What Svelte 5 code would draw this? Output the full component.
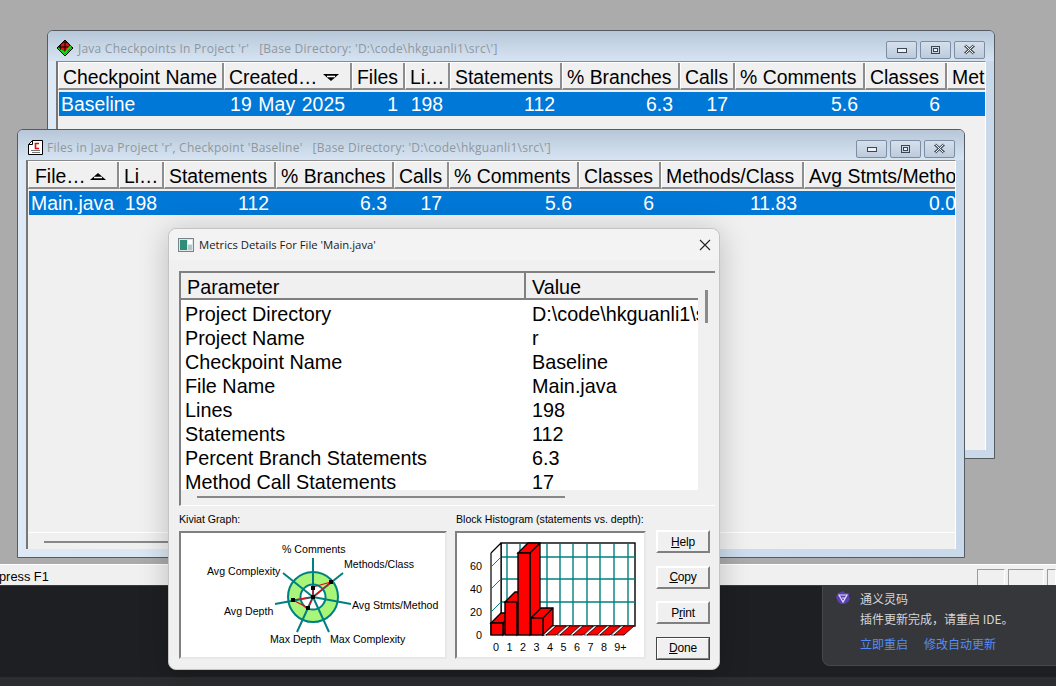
<script>
  const cols1 = [
    { t: 'Checkpoint Name', w: 166 }, { t: 'Created…', w: 128, sort: 'down' }, { t: 'Files', w: 53 }, { t: 'Li…', w: 45 },
    { t: 'Statements', w: 112 }, { t: '% Branches', w: 118 }, { t: 'Calls', w: 55 }, { t: '% Comments', w: 130 },
    { t: 'Classes', w: 82 }, { t: 'Methods/Class', w: 143 }
  ];
  const row1 = [
    { t: 'Baseline', w: 166, l: 1 }, { t: '19 May 2025', w: 128, l: 1 }, { t: '1', w: 53 }, { t: '198', w: 45 },
    { t: '112', w: 112 }, { t: '6.3', w: 118 }, { t: '17', w: 55 }, { t: '5.6', w: 130 }, { t: '6', w: 82 }, { t: '11.83', w: 143 }
  ];
  const cols2 = [
    { t: 'File…', w: 91, sort: 'up' }, { t: 'Li…', w: 45 }, { t: 'Statements', w: 112 }, { t: '% Branches', w: 118 },
    { t: 'Calls', w: 55 }, { t: '% Comments', w: 130 }, { t: 'Classes', w: 82 }, { t: 'Methods/Class', w: 143 }, { t: 'Avg Stmts/Method', w: 170 }
  ];
  const row2 = [
    { t: 'Main.java', w: 91, l: 1 }, { t: '198', w: 45 }, { t: '112', w: 112 }, { t: '6.3', w: 118 }, { t: '17', w: 55 },
    { t: '5.6', w: 130 }, { t: '6', w: 82 }, { t: '11.83', w: 143 }, { t: '0.0', w: 159 }
  ];
  const params = [
    ['Project Directory', 'D:\\code\\hkguanli1\\src\\'], ['Project Name', 'r'], ['Checkpoint Name', 'Baseline'],
    ['File Name', 'Main.java'], ['Lines', '198'], ['Statements', '112'], ['Percent Branch Statements', '6.3'], ['Method Call Statements', '17']
  ];
  const spokes = [[313, 558], [343, 573], [351, 604], [329, 632], [297, 632], [275, 604], [283, 573]];
  const kLabels = [
    ['% Comments', 282, 553], ['Methods/Class', 344, 568], ['Avg Stmts/Method', 352, 609], ['Max Complexity', 330, 643],
    ['Max Depth', 270, 643], ['Avg Depth', 224, 615], ['Avg Complexity', 207, 575]
  ];
  const bars = [
    { x: 491, top: 623 }, { x: 505, top: 602 }, { x: 518, top: 553 }, { x: 531, top: 618 },
    { x: 544, top: 635 }, { x: 558, top: 635 }, { x: 571, top: 635 }, { x: 585, top: 635 }, { x: 598, top: 635 }, { x: 612, top: 635 }
  ];
  const xLabels = ['0', '1', '2', '3', '4', '5', '6', '7', '8', '9+'];
  const vGrid = [507, 520, 533, 547, 560, 573, 587, 600, 614, 628];
  const yLabels = [[60, 570], [40, 593], [20, 616], [0, 639]];
  const hGrid = [557, 579, 602];
  const buttons = [['H', 'elp'], ['C', 'opy'], ['', 'Print'], ['D', 'one']];
</script>

{#snippet winButtons()}
  <div class="winbtns">
    <div class="wb"><svg width="12" height="8" viewBox="0 0 12 8"><rect x="1.5" y="2.5" width="9" height="4" fill="#eef2f6" stroke="#3c4652"/></svg></div>
    <div class="wb"><svg width="12" height="10" viewBox="0 0 12 10"><rect x="1.5" y="1.5" width="8" height="7" fill="none" stroke="#3c4652"/><rect x="3.5" y="3.5" width="4" height="3" fill="#eef2f6" stroke="#3c4652"/></svg></div>
    <div class="wb close"><svg width="13" height="11" viewBox="0 0 13 11"><path d="M2 1.5 L11 9.5 M11 1.5 L2 9.5" stroke="#4a5460" stroke-width="3"/><path d="M2.5 1.5 L10.5 9.5 M10.5 1.5 L2.5 9.5" stroke="#f4f6f8" stroke-width="1"/></svg></div>
  </div>
{/snippet}

{#snippet listView(cols, row)}
  <div class="list">
    <div class="hdr">
      {#each cols as c}
        <div class="hc" style="flex-basis:{c.w}px">
          <span>{c.t}</span>
          {#if c.sort === 'down'}
            <svg class="sort" width="16" height="9" viewBox="0 0 16 9"><path d="M0 1 H16 L8 8 Z" fill="#000"/><path d="M4 3.5 H12" stroke="#fff" stroke-width="1.5"/></svg>
          {:else if c.sort === 'up'}
            <svg class="sort" width="16" height="9" viewBox="0 0 16 9"><path d="M0 8 H16 L8 1 Z" fill="#000"/><path d="M4 5.5 H12" stroke="#fff" stroke-width="1.5"/></svg>
          {/if}
        </div>
      {/each}
    </div>
    <div class="sel">
      {#each row as c}
        <div class="sc" class:left={c.l} style="flex-basis:{c.w}px">{c.t}</div>
      {/each}
    </div>
  </div>
{/snippet}

<div class="desk">
  <div class="grey"></div>
  <div class="status">
    <span class="hint">press F1</span>
    <div class="cells"><i class="c1"></i><i class="c2"></i><i class="c3"></i></div>
  </div>
  <div class="dark"></div>
  <div class="foot"></div>

  <section class="win w1">
    <header class="tbar">
      <svg class="ic" width="18" height="18" viewBox="0 0 18 18">
        <path d="M9 1 L17 9 L9 17 L1 9 Z" fill="#19d419" stroke="#000"/>
        <circle cx="9" cy="8" r="5" fill="#e01010" stroke="#000"/>
        <path d="M9 1 V15 M2 8 H16" stroke="#000"/>
        <path d="M5 11 L9 14 L15 7" fill="none" stroke="#19d419" stroke-width="2"/>
      </svg>
      <span class="ttl">Java Checkpoints In Project 'r'&nbsp;&nbsp; [Base Directory: 'D:\code\hkguanli1\src\']</span>
      {@render winButtons()}
    </header>
    <div class="client">{@render listView(cols1, row1)}</div>
  </section>

  <section class="win w2">
    <header class="tbar">
      <svg class="ic" width="16" height="16" viewBox="0 0 16 16">
        <path d="M4.5 .5 H14.5 V14.5 H.5 V4.5 Z" fill="#fff" stroke="#000"/>
        <path d="M.5 4.5 H4.5 V.5" fill="none" stroke="#000"/>
        <path d="M11 3.5 H7.5 V8.5 H11" fill="none" stroke="#e01010" stroke-width="1.6"/>
        <path d="M3 10.5 H12 M4 12.5 H12" stroke="#777"/>
      </svg>
      <span class="ttl">Files in Java Project 'r', Checkpoint 'Baseline'&nbsp;&nbsp; [Base Directory: 'D:\code\hkguanli1\src\']</span>
      {@render winButtons()}
    </header>
    <div class="client">
      {@render listView(cols2, row2)}
      <div class="w2scroll"></div>
    </div>
  </section>

  <section class="dlg">
    <header class="dtitle">
      <svg width="16" height="14" viewBox="0 0 16 14"><rect x=".5" y=".5" width="15" height="13" fill="#dfe6e6" stroke="#7a8488"/><rect x="2" y="2" width="7" height="10" fill="#2e8c78"/><rect x="10" y="2" width="4" height="4" fill="#fff"/><rect x="10" y="7" width="4" height="5" fill="#b8c4c8"/></svg>
      <span>Metrics Details For File 'Main.java'</span>
      <svg class="x" width="12" height="12" viewBox="0 0 12 12"><path d="M1 1 L11 11 M11 1 L1 11" stroke="#222" stroke-width="1.1"/></svg>
    </header>
    <div class="dbody">
      <div class="table">
        <div class="thead">
          <div class="th one">Parameter</div>
          <div class="th two">Value</div>
        </div>
        <div class="tmain">
          <div class="rows">
            {#each params as p}
              <div class="tr"><div class="td one">{p[0]}</div><div class="td two">{p[1]}</div></div>
            {/each}
          </div>
          <div class="vbar"><div class="vthumb"></div></div>
        </div>
        <div class="hbar"><div class="hthumb"></div></div>
      </div>

      <div class="lower">
        <div class="panel kiv">
          <div class="cap">Kiviat Graph:</div>
          <div class="sunken">
            <svg width="264" height="124" viewBox="181 533 264 124">
              <circle cx="313" cy="597" r="25" fill="#a8f57a" stroke="#008080" stroke-width="2"/>
              <circle cx="313" cy="597" r="12.5" fill="#fff" stroke="#008080" stroke-width="2"/>
              {#each spokes as s}
                <line x1="313" y1="597" x2={s[0]} y2={s[1]} stroke="#008080" stroke-width="2"/>
              {/each}
              <path d="M313 587 L331 582 L313 597 L308 608 L293 600 L313 597 Z" fill="none" stroke="#f00010" stroke-width="1.2"/>
              <path d="M311 586 h4 v4 h-4 Z M329 580 h4 v4 h-4 Z M311 595 h4 v4 h-4 Z M306 606 h4 v4 h-4 Z M291 598 h4 v4 h-4 Z" fill="#000"/>
              {#each kLabels as l}
                <text x={l[1]} y={l[2]} class="kt">{l[0]}</text>
              {/each}
            </svg>
          </div>
        </div>
        <div class="panel hist">
          <div class="cap">Block Histogram (statements vs. depth):</div>
          <div class="sunken">
            <svg width="187" height="124" viewBox="457 533 187 124">
              <rect x="501" y="543" width="134" height="83" fill="#fff" stroke="#000" stroke-width="1.4"/>
              {#each vGrid as x}
                <line x1={x} y1="544" x2={x} y2="626" stroke="#008080" stroke-width="1.4"/>
              {/each}
              {#each hGrid as y}
                <line x1="501" y1={y} x2="635" y2={y} stroke="#008080" stroke-width="1.4"/>
              {/each}
              <path d="M491 553 L501 543 V626 L491 635 Z" fill="#fff"/>
              <path d="M491 553 L501 543 M491 553 V635 M501 543 V626" stroke="#000" fill="none" stroke-width="1.2"/>
              {#each hGrid as y}
                <line x1="491" y1={y + 10} x2="501" y2={y} stroke="#008080"/>
              {/each}
              {#each bars as b}
                {#if b.top < 635}
                  <path d="M{b.x} {b.top} l10 -10 h12 v{635 - b.top} l-10 10 v-{635 - b.top} h-12 Z" fill="#f00" stroke="#000" stroke-width="1.3"/>
                  <rect x={b.x} y={b.top} width="12" height={635 - b.top} fill="#f00" stroke="#000" stroke-width="1.4"/>
                  <line x1={b.x + 12} y1={b.top} x2={b.x + 22} y2={b.top - 10} stroke="#000" stroke-width="1.2"/>
                {:else}
                  <path d="M{b.x - 1} 635 l10 -9 h4 l-10 9 Z" fill="#fff" stroke="#000" stroke-width=".6"/>
                  <path d="M{b.x + 2} 635 l10 -9 h10 l-10 9 Z" fill="#f00" stroke="#000" stroke-width=".8"/>
                {/if}
              {/each}
              {#each yLabels as y}
                <text x="482" y={y[1]} text-anchor="end" class="ht">{y[0]}</text>
              {/each}
              {#each xLabels as l, i}
                <text x={496 + i * 13.5 + (i === 9 ? 3 : 0)} y="651" text-anchor="middle" class="ht">{l}</text>
              {/each}
            </svg>
          </div>
        </div>
        <div class="btns">
          {#each buttons as b, i}
            <div class="btn" class:dflt={i === 3}>
              {#if i === 2}P<u>r</u>int{:else}<u>{b[0]}</u>{b[1]}{/if}
            </div>
          {/each}
        </div>
      </div>
    </div>
  </section>

  <aside class="toast">
    <svg class="logo" width="14" height="14" viewBox="0 0 14 14">
      <path d="M7 0 L9 2 L13 2 L13 6 L14 8 L12 11 L9 13 L5 13 L2 11 L0 6 L2 2 L5 1 Z" fill="#5a3fb0"/>
      <path d="M3 4 H11 L7 11 Z M6 7 H9" fill="none" stroke="#e6e0ff" stroke-width="1.2"/>
    </svg>
    <div class="ttxt">
      <div class="t1">通义灵码</div>
      <div class="t2">插件更新完成，请重启 IDE。</div>
      <div class="t3"><span>立即重启</span><span>修改自动更新</span></div>
    </div>
  </aside>
</div>

<style>
  :global(body) { margin: 0; background: #1e1f22; }
  .desk {
    position: relative; width: 1056px; height: 686px; overflow: hidden;
    display: flex; flex-direction: column;
    font-family: "Liberation Sans", Arial, sans-serif; color: #000;
  }
  .grey { height: 564px; background: #ababab; }
  .status {
    height: 20px; background: #f0f0f0; border-top: 1px solid #fff; border-bottom: 1px solid #3a3a3a;
    display: flex; justify-content: space-between; align-items: center; font-size: 12.8px;
  }
  .hint { margin-left: -1px; padding-top: 3px; }
  .cells { display: flex; gap: 3px; align-self: flex-end; }
  .cells i { display: block; height: 16px; border-top: 1px solid #9c9c9c; border-left: 1px solid #9c9c9c; box-sizing: border-box; border-right: 1px solid #fff; }
  .c1 { width: 28px; } .c2 { width: 36px; } .c3 { width: 9px; }
  .dark { flex: 1; background: #1e1f22; }
  .foot { height: 9px; background: #2b2d30; }

  .win {
    position: absolute; width: 948px; height: 429px; box-sizing: border-box;
    border: 1px solid #555b60; border-radius: 6px 6px 0 0;
    background: linear-gradient(90deg, #dde9f5, #c9d9ea);
    display: flex; flex-direction: column; padding: 0 8px 8px;
  }
  .w1 { left: 47px; top: 30px; }
  .w2 { left: 17px; top: 129px; }
  .tbar {
    height: 30px; box-sizing: border-box; margin: 0 -8px; padding: 5px 8px 0; display: flex; align-items: center; gap: 3px;
    background: linear-gradient(#b8c7d8, #d6e4f2); border-radius: 5px 5px 0 0; flex: none;
  }
  .ic { flex: none; }
  .w2 .ic { margin-left: 2px; }
  .w1 .ic { margin-right: 1px; margin-top: -1px; }
  .ttl { font-family: "Open Sans", sans-serif; font-size: 12px; color: #8f979f; flex: 1; white-space: pre; letter-spacing: .02em; }
  .winbtns { display: flex; gap: 3px; margin-right: 1px; margin-top: 2px; }
  .wb {
    width: 29px; height: 16px; border: 1px solid #7d8da3; border-radius: 2px;
    background: linear-gradient(#d6e0ec, #bccbdc); display: flex; align-items: center; justify-content: center;
  }
  .client {
    flex: 1; background: #f0f0f0; border-top: 1px solid #8a8a8a; border-left: 2px solid #777; border-right: 1px solid #fff;
    position: relative; overflow: hidden; min-height: 0;
  }
  .list { display: flex; flex-direction: column; overflow: hidden; }
  .hdr { display: flex; height: 27px; border-top: 1px solid #fff; }
  .hc {
    flex: 0 0 auto; box-sizing: border-box; display: flex; align-items: center; padding: 3px 0 0 4px; gap: 6px;
    font-size: 19.4px; white-space: nowrap; overflow: hidden; background: #f0f0f0;
    border-right: 2px solid #8d8d8d; border-bottom: 2px solid #8d8d8d; border-left: 1px solid #fff;
  }
  .w2 .hc:first-child { padding-left: 6px; gap: 4px; }
  .sort { flex: none; }
  .sel {
    display: flex; height: 24px; margin: 2px 0 0 1px; background: #0078d7; color: #fff;
    font-size: 19.4px; line-height: 24px; overflow: hidden;
  }
  .sc { flex: 0 0 auto; box-sizing: border-box; text-align: right; padding-right: 8px; white-space: nowrap; }
  .sc.left { text-align: left; padding-left: 2px; padding-right: 0; }
  .w1 .sc:nth-child(2) { padding-left: 5px; word-spacing: 1px; letter-spacing: .1px; }
  .w2scroll { position: absolute; left: 16px; width: 140px; top: 380px; height: 2px; background: #888; }
  .w2 .client::after { content: ""; position: absolute; left: 0; right: 0; top: 371px; height: 1px; background: #fff; }

  .dlg {
    position: absolute; left: 168px; top: 228px; width: 552px; height: 442px; box-sizing: border-box;
    background: #f0f0f0; border-radius: 8px; border: 1px solid #c4c4c4;
    box-shadow: 0 4px 30px rgba(0, 0, 0, .22); display: flex; flex-direction: column;
  }
  .dtitle {
    height: 31px; flex: none; display: flex; align-items: center; gap: 5px; padding: 0 8px 0 9px;
    font-family: "Open Sans", sans-serif; font-size: 11.3px; color: #1a1a1a; background: #f3f3f3; border-radius: 8px 8px 0 0;
  }
  .dtitle .x { margin-left: auto; }
  .dbody { flex: 1; padding: 11px 4px 0 10px; display: flex; flex-direction: column; min-height: 0; }
  .table {
    height: 232px; border-left: 2px solid #808080; border-top: 2px solid #808080; border-bottom: 1px solid #fff;
    display: flex; flex-direction: column; flex: none;
  }
  .thead { display: flex; width: 517px; height: 27px; flex: none; border-bottom: 2px solid #808080; font-size: 19.8px; box-sizing: border-box; background: #f0f0f0; }
  .th { display: flex; align-items: center; padding-top: 3px; }
  .th.one { width: 345px; padding-left: 6px; box-sizing: border-box; border-right: 2px solid #808080; }
  .th.two { padding-left: 6px; }
  .tmain { flex: 1; display: flex; min-height: 0; }
  .rows { width: 517px; background: #fff; overflow: hidden; }
  .tr { display: flex; height: 24px; font-size: 19.8px; line-height: 24px; white-space: nowrap; overflow: hidden; }
  .tr:first-child { margin-top: 2px; }
  .td.one { width: 347px; padding-left: 4px; box-sizing: border-box; }
  .td.two { width: 170px; overflow: hidden; padding-left: 4px; box-sizing: border-box; }
  .vbar { flex: 1; position: relative; }
  .vthumb { position: absolute; left: 7px; top: -10px; width: 3px; height: 33px; background: #8a8a8a; }
  .hbar { height: 15px; flex: none; position: relative; }
  .hthumb { position: absolute; left: 16px; width: 368px; top: 6px; height: 2px; background: #888; }
  .lower { display: flex; flex: 1; padding-top: 5px; }
  .panel { display: flex; flex-direction: column; }
  .cap { font-size: 10.6px; height: 20px; line-height: 16px; white-space: nowrap; }
  .kiv { width: 276px; }
  .kiv .sunken { width: 268px; }
  .hist { width: 201px; }
  .hist .sunken { width: 191px; }
  .hist .cap { padding-left: 1px; }
  .sunken {
    box-sizing: border-box; height: 128px; background: #fff; border: 2px solid; border-color: #808080 #e8e8e8 #e8e8e8 #808080; overflow: hidden;
  }
  .sunken svg { display: block; }
  .kt { font-size: 10.6px; font-family: "Liberation Sans", Arial, sans-serif; fill: #000; }
  .ht { font-size: 10.8px; font-family: "Liberation Sans", Arial, sans-serif; fill: #000; }
  .btns { display: flex; flex-direction: column; gap: 12.5px; padding-top: 19px; }
  .btn {
    width: 54px; height: 23px; box-sizing: border-box; background: #f0f0f0; font-size: 12px; display: flex; align-items: center; justify-content: center;
    border: 2px solid; border-color: #fff #808080 #808080 #fff; letter-spacing: -.2px;
  }
  .dflt { outline: 1px solid #444; outline-offset: -1px; }

  .toast {
    position: absolute; left: 822px; top: 586px; width: 240px; height: 80px; box-sizing: border-box;
    background: #36373b; border: 1px solid #46474b; border-top: none; border-radius: 0 0 0 8px;
    display: flex; padding: 4px 0 0 13px; gap: 10px;
  }
  .logo { flex: none; margin-top: 1px; }
  .ttxt { font-family: "Noto Sans CJK SC", "Noto Sans", sans-serif; font-size: 12px; color: #d4d6da; line-height: 18px; }
  .t2 { margin-top: 2px; }
  .t3 { margin-top: 7px; color: #558cf5; display: flex; gap: 16px; }
</style>
